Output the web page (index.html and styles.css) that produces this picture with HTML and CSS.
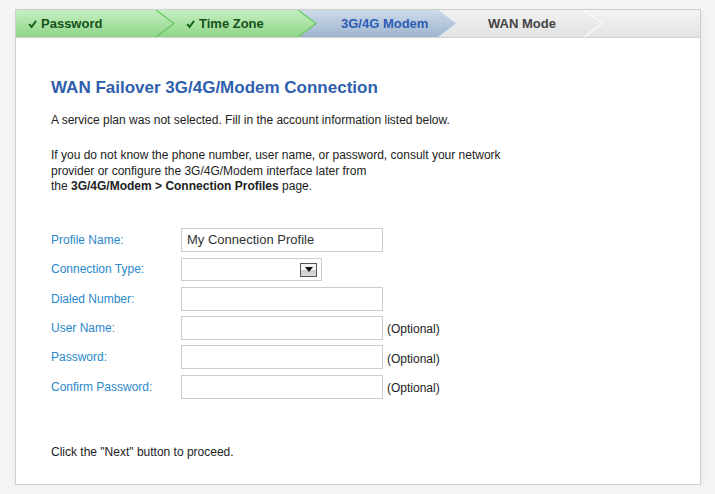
FILE: index.html
```html
<!DOCTYPE html>
<html>
<head>
<meta charset="utf-8">
<link rel="stylesheet" href="styles.css">
</head>
<body>
<div class="panel">
  <div class="tabs">
    <div class="tab tab-done tab-1"><div class="face"><svg class="check" width="9" height="9" viewBox="0 0 8 8"><path d="M0.3 4.3 L2.1 3.1 L3.1 4.8 L6.5 0.3 L7.8 1.3 L3.3 7.6 Z" fill="#13631a"/></svg><span>Password</span></div></div>
    <div class="tab tab-done tab-2"><div class="face"><svg class="check" width="9" height="9" viewBox="0 0 8 8"><path d="M0.3 4.3 L2.1 3.1 L3.1 4.8 L6.5 0.3 L7.8 1.3 L3.3 7.6 Z" fill="#13631a"/></svg><span>Time Zone</span></div></div>
    <div class="tab tab-current tab-3"><div class="face"><span>3G/4G Modem</span></div></div>
    <div class="tab tab-next tab-4"><div class="face"><span>WAN Mode</span></div></div>
  </div>
  <div class="content">
    <h1 class="title">WAN Failover 3G/4G/Modem Connection</h1>
    <p class="text">A service plan was not selected. Fill in the account information listed below.</p>
    <p class="text text-gap">If you do not know the phone number, user name, or password, consult your network<br>provider or configure the 3G/4G/Modem interface later from<br>the <b>3G/4G/Modem &gt; Connection Profiles</b> page.</p>
    <div class="form">
      <div class="row"><label class="label">Profile Name:</label><div class="field">My Connection Profile</div></div>
      <div class="row"><label class="label">Connection Type:</label><div class="select"><span class="drop"><svg width="8" height="5" viewBox="0 0 8 5"><path d="M0 0 H8 L4 5 Z" fill="#111"/></svg></span></div></div>
      <div class="row"><label class="label">Dialed Number:</label><div class="field"></div></div>
      <div class="row"><label class="label">User Name:</label><div class="field"></div><span class="opt">(Optional)</span></div>
      <div class="row"><label class="label">Password:</label><div class="field"></div><span class="opt">(Optional)</span></div>
      <div class="row"><label class="label">Confirm Password:</label><div class="field"></div><span class="opt">(Optional)</span></div>
    </div>
    <p class="text next">Click the "Next" button to proceed.</p>
  </div>
</div>
</body>
</html>
```
FILE: styles.css
```css
html, body {
  margin: 0;
  padding: 0;
  background: #f4f4f4;
  font-family: "Liberation Sans", Arial, sans-serif;
}
.panel {
  margin: 9px 0 0 15px;
  width: 686px;
  height: 476px;
  box-sizing: border-box;
  border: 1px solid #cfcfcf;
  background: #fff;
  box-shadow: 1px 2px 6px rgba(0,0,0,0.06);
}
.tabs {
  display: flex;
  height: 27px;
  border-bottom: 1px solid #d2d2d2;
  background: linear-gradient(#f3f3f3, #e4e4e4);
}
.tab {
  position: relative;
  height: 27px;
  clip-path: polygon(0 0, calc(100% - 18px) 0, 100% 50%, calc(100% - 18px) 100%, 0 100%);
}
.face {
  box-sizing: border-box;
  width: calc(100% - 2px);
  height: 27px;
  display: flex;
  align-items: center;
  font-size: 13px;
  font-weight: bold;
  clip-path: polygon(0 0, calc(100% - 18px) 0, 100% 50%, calc(100% - 18px) 100%, 0 100%);
}
.check { margin-right: 4px; margin-top: 1px; }
.tab-1 { width: 159px; z-index: 4; }
.tab-2 { width: 160px; margin-left: -18px; z-index: 3; }
.tab-3 { width: 158px; margin-left: -17px; z-index: 2; }
.tab-4 { width: 160px; margin-left: -15px; z-index: 1; }
.tab-1 .face { padding-left: 12px; }
.tab-2 .face { padding-left: 29px; }
.tab-3 .face { padding-left: 41px; }
.tab-4 .face { padding-left: 45px; }
.tab-done { background: #62c95c; }
.tab-done .face {
  background: linear-gradient(#c6efc1, #8ed588);
  color: #15521a;
}
.tab-current { background: #e3ecf5; }
.tab-current .face {
  background: linear-gradient(#cddaea, #9fb5cf);
  color: #2b5db5;
}
.tab-next { background: #fbfbfb; }
.tab-next .face {
  background: linear-gradient(#f1f1f1, #e3e3e3);
  color: #444;
}
.content {
  padding: 0 0 0 35px;
}
.title {
  margin: 40px 0 0 0;
  font-size: 17px;
  line-height: 20px;
  color: #2f60ad;
  font-weight: bold;
}
.text {
  margin: 15px 0 0 0;
  font-size: 12px;
  line-height: 15.5px;
  color: #222;
}
.text-gap { margin-top: 19.5px; }
.form {
  margin-top: 33.25px;
  display: flex;
  flex-direction: column;
  gap: 5.4px;
}
.row {
  display: flex;
  align-items: center;
  height: 24px;
}
.label {
  width: 130px;
  font-size: 12px;
  color: #2a88cc;
}
.field {
  box-sizing: border-box;
  width: 202px;
  height: 24px;
  border: 1px solid #cccccc;
  padding-left: 5px;
  font-size: 13px;
  line-height: 22px;
  color: #333;
}
.select {
  box-sizing: border-box;
  width: 141px;
  height: 23px;
  margin-top: 1px;
  border: 1px solid #cccccc;
  display: flex;
  justify-content: flex-end;
  align-items: center;
  padding-right: 4px;
}
.drop {
  box-sizing: border-box;
  width: 17px;
  height: 14px;
  border: 1px solid #555;
  background: linear-gradient(#f4f4f4 0, #f4f4f4 50%, #cfcfcf 50%, #d8d8d8 100%);
  display: flex;
  align-items: center;
  justify-content: center;
}
.opt {
  margin-left: 4px;
  margin-top: 3px;
  font-size: 12px;
  color: #222;
}
.next { margin-top: 46px; }
```
